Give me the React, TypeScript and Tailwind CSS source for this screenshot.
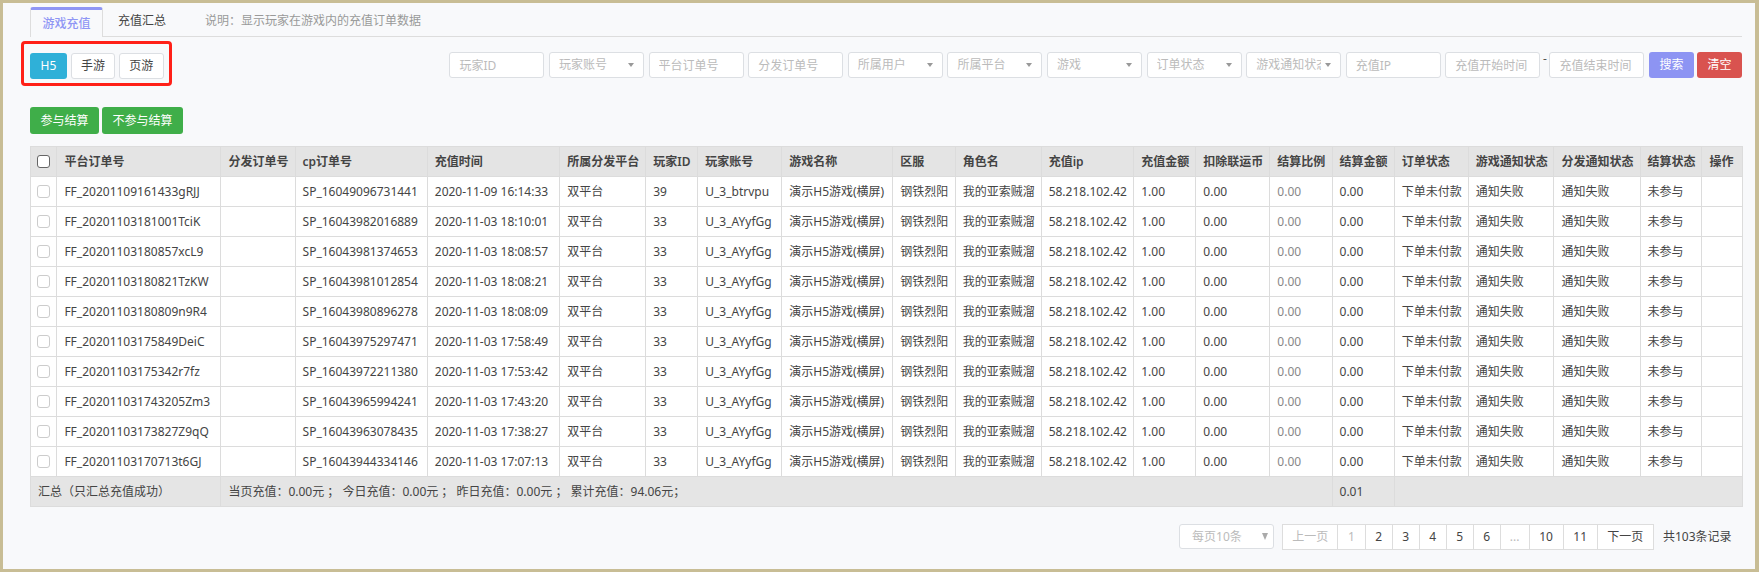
import React from "react";

const font = { fontFamily: '"Noto Sans", "Noto Sans CJK SC", sans-serif' };

const columns = [
  { title: "平台订单号", cls: "w-[164px]" },
  { title: "分发订单号", cls: "w-[74.2px]" },
  { title: "cp订单号", cls: "w-[132.2px]" },
  { title: "充值时间", cls: "w-[132.6px]" },
  { title: "所属分发平台", cls: "w-[85.9px]" },
  { title: "玩家ID", cls: "w-[52px]" },
  { title: "玩家账号", cls: "w-[84px]" },
  { title: "游戏名称", cls: "w-[111px]" },
  { title: "区服", cls: "w-[62.4px]" },
  { title: "角色名", cls: "w-[86px]" },
  { title: "充值ip", cls: "w-[92.6px]" },
  { title: "充值金额", cls: "w-[62.1px]" },
  { title: "扣除联运币", cls: "w-[74px]" },
  { title: "结算比例", cls: "w-[62.2px]" },
  { title: "结算金额", cls: "w-[62.2px]" },
  { title: "订单状态", cls: "w-[74px]" },
  { title: "游戏通知状态", cls: "w-[85.7px]" },
  { title: "分发通知状态", cls: "w-[86.2px]" },
  { title: "结算状态", cls: "w-[61.8px]" },
  { title: "操作", cls: "w-[40.5px]" },
];

const orders = [
  ["FF_20201109161433gRJJ", "SP_16049096731441", "2020-11-09 16:14:33", "39", "U_3_btrvpu"],
  ["FF_20201103181001TciK", "SP_16043982016889", "2020-11-03 18:10:01", "33", "U_3_AYyfGg"],
  ["FF_20201103180857xcL9", "SP_16043981374653", "2020-11-03 18:08:57", "33", "U_3_AYyfGg"],
  ["FF_20201103180821TzKW", "SP_16043981012854", "2020-11-03 18:08:21", "33", "U_3_AYyfGg"],
  ["FF_20201103180809n9R4", "SP_16043980896278", "2020-11-03 18:08:09", "33", "U_3_AYyfGg"],
  ["FF_20201103175849DeiC", "SP_16043975297471", "2020-11-03 17:58:49", "33", "U_3_AYyfGg"],
  ["FF_20201103175342r7fz", "SP_16043972211380", "2020-11-03 17:53:42", "33", "U_3_AYyfGg"],
  ["FF_202011031743205Zm3", "SP_16043965994241", "2020-11-03 17:43:20", "33", "U_3_AYyfGg"],
  ["FF_20201103173827Z9qQ", "SP_16043963078435", "2020-11-03 17:38:27", "33", "U_3_AYyfGg"],
  ["FF_20201103170713t6GJ", "SP_16043944334146", "2020-11-03 17:07:13", "33", "U_3_AYyfGg"],
];

const filters = [
  { label: "玩家ID" },
  { label: "玩家账号", select: true },
  { label: "平台订单号" },
  { label: "分发订单号" },
  { label: "所属用户", select: true },
  { label: "所属平台", select: true },
  { label: "游戏", select: true },
  { label: "订单状态", select: true },
  { label: "游戏通知状态", select: true },
  { label: "充值IP" },
  { label: "充值开始时间" },
];

const pages = [
  { label: "上一页", cls: "w-[55.3px]", off: true },
  { label: "1", cls: "w-[27.4px]", off: true },
  { label: "2", cls: "w-[26.9px]" },
  { label: "3", cls: "w-[26.9px]" },
  { label: "4", cls: "w-[27.3px]" },
  { label: "5", cls: "w-[26.9px]" },
  { label: "6", cls: "w-[26.9px]" },
  { label: "...", cls: "w-[29px]", off: true },
  { label: "10", cls: "w-[34px]" },
  { label: "11", cls: "w-[34.1px]" },
  { label: "下一页", cls: "w-[56.3px]" },
];

function Caret() {
  return <span className="h-0 w-0 border-x-[3.5px] border-t-[4px] border-x-transparent border-t-[#999]" />;
}

function Filter({ label, select }: { label: string; select?: boolean }) {
  if (select) {
    return (
      <div className="flex h-[26px] w-[95px] items-center justify-between rounded-[3px] border border-[#dcdfe3] bg-white pl-[9px] pr-[9px] text-[#bbb]">
        <span className="w-[65px] overflow-hidden whitespace-nowrap">{label}</span>
        <Caret />
      </div>
    );
  }
  return (
    <input
      placeholder={label}
      className="h-[26px] w-[95px] rounded-[3px] border border-[#dcdfe3] bg-white pl-[9px] outline-none placeholder:text-[#bbb]"
    />
  );
}

function Check({ head }: { head?: boolean }) {
  return (
    <input
      type="checkbox"
      className={`mx-auto block h-[13px] w-[13px] appearance-none rounded-[3px] border bg-white ${head ? "border-[#666]" : "border-[#ccc]"}`}
    />
  );
}

export default function App() {
  return (
    <div
      style={font}
      className="h-[572px] w-[1759px] overflow-hidden border-y-[3px] border-l-[3px] border-r-[4px] border-[#c8bd95] bg-[#f8f9fb] pl-[27px] pr-[13px] pt-[4px] text-[12px] text-[#444]"
    >
      {/* tabs */}
      <div className="flex h-[30px] items-start border-b border-[#dddddd]">
        <div className="flex h-[30px] w-[73px] items-center justify-center rounded-t-[3px] border-x border-t-[3px] border-x-[#dddddd] border-t-[#8f96f5] bg-[#f8f9fb] font-medium text-[#8f96f5]">
          游戏充值
        </div>
        <div className="flex h-[27px] w-[78px] items-center justify-center text-[#444]">充值汇总</div>
        <div className="flex h-[27px] items-center pl-[24px] text-[#999]">说明：显示玩家在游戏内的充值订单数据</div>
      </div>

      {/* type switch + filters */}
      <div className="mt-[4px] flex items-start justify-between">
        <div className="-ml-[9px] flex h-[45px] w-[151px] items-start gap-[4px] rounded-[4px] border-[3px] border-[#ff2018] pl-[6px] pt-[9px]">
          <button className="h-[26px] w-[37px] rounded-[3px] bg-[#2fb0d8] text-white">H5</button>
          <button className="h-[26px] w-[44px] rounded-[3px] border border-[#dcdfe3] bg-white">手游</button>
          <button className="h-[26px] w-[44.7px] rounded-[3px] border border-[#dcdfe3] bg-white">页游</button>
        </div>
        <div className="mt-[11px] flex items-start gap-[4.6px]">
          {filters.map((f) => (
            <Filter key={f.label} label={f.label} select={f.select} />
          ))}
          <span className="-mx-[2px] -mt-[3px] leading-[20px] text-[#555]">-</span>
          <Filter label="充值结束时间" />
          <button className="h-[26px] w-[45px] rounded-[3px] bg-[#8d94f3] text-white">搜索</button>
          <button className="-ml-[1.6px] h-[26px] w-[45px] rounded-[3px] bg-[#d9534f] text-white">清空</button>
        </div>
      </div>

      {/* actions */}
      <div className="mt-[21px] flex gap-[3px]">
        <button className="h-[27px] w-[69px] rounded-[3px] bg-[#3fae49] text-white">参与结算</button>
        <button className="h-[27px] w-[81px] rounded-[3px] bg-[#3fae49] text-white">不参与结算</button>
      </div>

      {/* table */}
      <table className="mt-[12px] w-[1712px] table-fixed border-collapse">
        <colgroup>
          <col className="w-[26.4px]" />
          {columns.map((c) => (
            <col key={c.title} className={c.cls} />
          ))}
        </colgroup>
        <thead>
          <tr className="h-[30px] bg-[#e4e4e4]">
            <th className="border border-[#dcdcdc]">
              <Check head />
            </th>
            {columns.map((c) => (
              <th key={c.title} className="overflow-hidden whitespace-nowrap border border-[#dcdcdc] px-[7px] text-left font-semibold text-[#444]">
                {c.title}
              </th>
            ))}
          </tr>
        </thead>
        <tbody>
          {orders.map((o) => (
            <tr key={o[0]} className="h-[30px] bg-white">
              <td className="border border-[#dcdcdc]">
                <Check />
              </td>
              {[o[0], "", o[1], o[2], "双平台", o[3], o[4], "演示H5游戏(横屏)", "钢铁烈阳", "我的亚索贼溜", "58.218.102.42", "1.00", "0.00", "0.00", "0.00", "下单未付款", "通知失败", "通知失败", "未参与", ""].map((v, i) => (
                <td key={i} className={`overflow-hidden whitespace-nowrap border border-[#dcdcdc] px-[7px] ${i === 13 ? "text-[#888]" : "text-[#444]"}`}>
                  {v}
                </td>
              ))}
            </tr>
          ))}
          <tr className="h-[30px] bg-[#e5e5e5]">
            <td colSpan={2} className="border border-[#dcdcdc] px-[7px]">
              汇总（只汇总充值成功）
            </td>
            <td colSpan={13} className="border border-[#dcdcdc] px-[7px]">
              当页充值：0.00元 ； 今日充值：0.00元 ； 昨日充值：0.00元 ； 累计充值：94.06元；
            </td>
            <td className="border border-[#dcdcdc] px-[7px]">0.01</td>
            <td colSpan={5} className="border border-[#dcdcdc]" />
          </tr>
        </tbody>
      </table>

      {/* pagination */}
      <div className="mt-[17px] flex items-start justify-end">
        <div className="flex h-[25px] w-[95px] items-center justify-between rounded-[3px] border border-[#dcdfe3] bg-white pl-[12px] pr-[5px] text-[#bbb]">
          每页10条
          <span className="h-0 w-0 border-x-[3px] border-t-[7px] border-x-transparent border-t-[#aaa]" />
        </div>
        <div className="ml-[8px] flex h-[26px] border-y border-l border-[#dddddd] bg-white">
          {pages.map((p) => (
            <div
              key={p.label}
              className={`flex items-center justify-center border-r border-[#dddddd] ${p.cls} ${p.off ? "text-[#bbb]" : "text-[#444]"}`}
            >
              {p.label}
            </div>
          ))}
        </div>
        <div className="ml-[9px] flex h-[26px] w-[79px] items-center whitespace-nowrap text-[#444]">共103条记录</div>
      </div>
    </div>
  );
}
